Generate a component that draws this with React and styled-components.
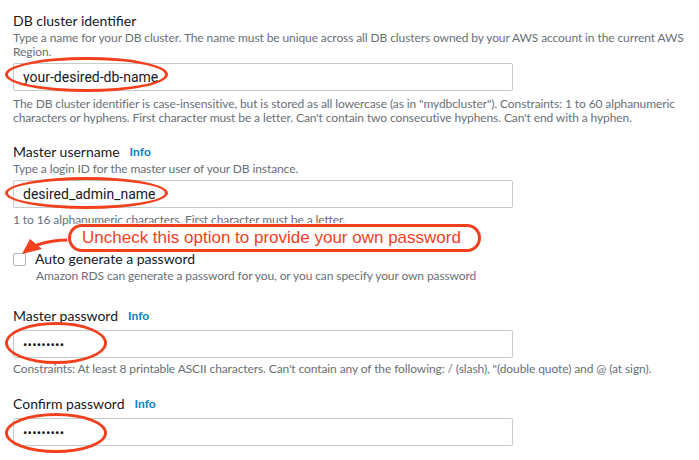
import styled, { createGlobalStyle } from 'styled-components';

const red = '#f2401f';

const GlobalStyle = createGlobalStyle`
  html, body {
    margin: 0;
    padding: 0;
    background: #ffffff;
  }
  body {
    font-family: Lato, 'Liberation Sans', Arial, sans-serif;
    color: #16191f;
  }
`;

const Page = styled.div`
  width: 699px;
  height: 460px;
  box-sizing: border-box;
  padding: 11px 0 0 13px;
  overflow: hidden;
  display: flex;
  flex-direction: column;
`;

const Section = styled.div`
  display: flex;
  flex-direction: column;
  margin-top: ${(p) => p.$gap || 0}px;
`;

const Label = styled.div`
  display: flex;
  align-items: center;
  gap: 10px;
  font-size: 14px;
  line-height: 20px;
  color: #16191f;
`;

const InfoLink = styled.a`
  font-size: 12px;
  font-weight: 700;
  color: #0a80c4;
  text-decoration: none;
`;

const Description = styled.div`
  font-size: 12px;
  line-height: 14px;
  letter-spacing: -0.1px;
  color: #687078;
  max-width: 676px;
`;

const InputWrap = styled.div`
  position: relative;
  margin-top: 4px;
  width: 500px;
`;

const FakeInput = styled.div`
  box-sizing: border-box;
  width: 500px;
  height: 28px;
  border: 1px solid #c4cccd;
  border-radius: 2px;
  padding: 0 9px;
  display: flex;
  align-items: center;
  font-family: Roboto, Lato, sans-serif;
  font-size: ${(p) => (p.$masked ? '13px' : '14px')};
  letter-spacing: ${(p) => (p.$masked ? '0.2px' : '0')};
  color: #16191f;
  background: #fff;
`;

const Help = styled(Description)`
  margin-top: ${(p) => p.$gap || 5}px;
`;

const Oval = styled.span`
  position: absolute;
  box-sizing: border-box;
  left: ${(p) => p.$x}px;
  top: ${(p) => p.$y}px;
  width: ${(p) => p.$w}px;
  height: ${(p) => p.$h}px;
  border: 3px solid ${red};
  border-radius: 50%;
  pointer-events: none;
`;

const CheckBlock = styled.div`
  position: relative;
  margin-top: 22px;
  display: flex;
  flex-direction: column;
`;

const CheckRow = styled.label`
  display: flex;
  align-items: center;
  gap: 9px;
  font-size: 14px;
  line-height: 20px;
`;

const Box = styled.span`
  box-sizing: border-box;
  width: 13px;
  height: 13px;
  border: 1px solid #aab7b8;
  border-radius: 2px;
  background: #fff;
`;

const CheckDesc = styled(Description)`
  padding-left: 23px;
`;

const Callout = styled.div`
  position: absolute;
  left: 55px;
  top: -25px;
  width: 413px;
  height: 28px;
  box-sizing: border-box;
  border: 3px solid ${red};
  border-radius: 14px;
  background: #fff;
  box-shadow: 0 0 0 1px #fff;
  display: flex;
  align-items: center;
  padding-left: 11px;
  font-family: 'Liberation Sans', Arial, sans-serif;
  font-size: 17px;
  color: ${red};
  white-space: nowrap;
`;

const Arrow = styled.svg`
  position: absolute;
  left: 0;
  top: -10px;
  overflow: visible;
`;

const Field = ({ label, info, description, value, masked, oval, help, gap, helpGap }) => (
  <Section $gap={gap}>
    <Label>
      {label}
      {info && <InfoLink>Info</InfoLink>}
    </Label>
    {description && <Description>{description}</Description>}
    <InputWrap>
      <FakeInput $masked={masked}>{value}</FakeInput>
      <Oval $x={oval.x} $y={oval.y} $w={oval.w} $h={oval.h} />
    </InputWrap>
    {help && <Help $gap={helpGap}>{help}</Help>}
  </Section>
);

const App = () => (
  <>
    <GlobalStyle />
    <Page>
      <Field
        label="DB cluster identifier"
        description="Type a name for your DB cluster. The name must be unique across all DB clusters owned by your AWS account in the current AWS Region."
        value="your-desired-db-name"
        oval={{ x: -8, y: -6, w: 163, h: 35 }}
        helpGap={6}
        help={`The DB cluster identifier is case-insensitive, but is stored as all lowercase (as in "mydbcluster"). Constraints: 1 to 60 alphanumeric characters or hyphens. First character must be a letter. Can't contain two consecutive hyphens. Can't end with a hyphen.`}
      />

      <Field
        gap={17}
        label="Master username"
        info
        description="Type a login ID for the master user of your DB instance."
        value="desired_admin_name"
        oval={{ x: -8, y: -3, w: 163, h: 32 }}
        help="1 to 16 alphanumeric characters. First character must be a letter."
      />

      <CheckBlock>
        <Arrow width="60" height="14" viewBox="0 0 60 14">
          <path d="M55 1 C 46 1, 36 2, 24 6" fill="none" stroke={red} strokeWidth="3" strokeLinecap="round" />
          <polygon points="9,15 17,0 29,10" fill={red} />
        </Arrow>
        <Callout>Uncheck this option to provide your own password</Callout>
        <CheckRow>
          <Box />
          Auto generate a password
        </CheckRow>
        <CheckDesc>Amazon RDS can generate a password for you, or you can specify your own password</CheckDesc>
      </CheckBlock>

      <Field
        gap={23}
        label="Master password"
        info
        value="•••••••••"
        masked
        oval={{ x: -8, y: -8, w: 102, h: 42 }}
        helpGap={4}
        help={`Constraints: At least 8 printable ASCII characters. Can't contain any of the following: / (slash), "(double quote) and @ (at sign).`}
      />

      <Field
        gap={18}
        label="Confirm password"
        info
        value="•••••••••"
        masked
        oval={{ x: -8, y: -5, w: 102, h: 40 }}
      />
    </Page>
  </>
);

export default App;
